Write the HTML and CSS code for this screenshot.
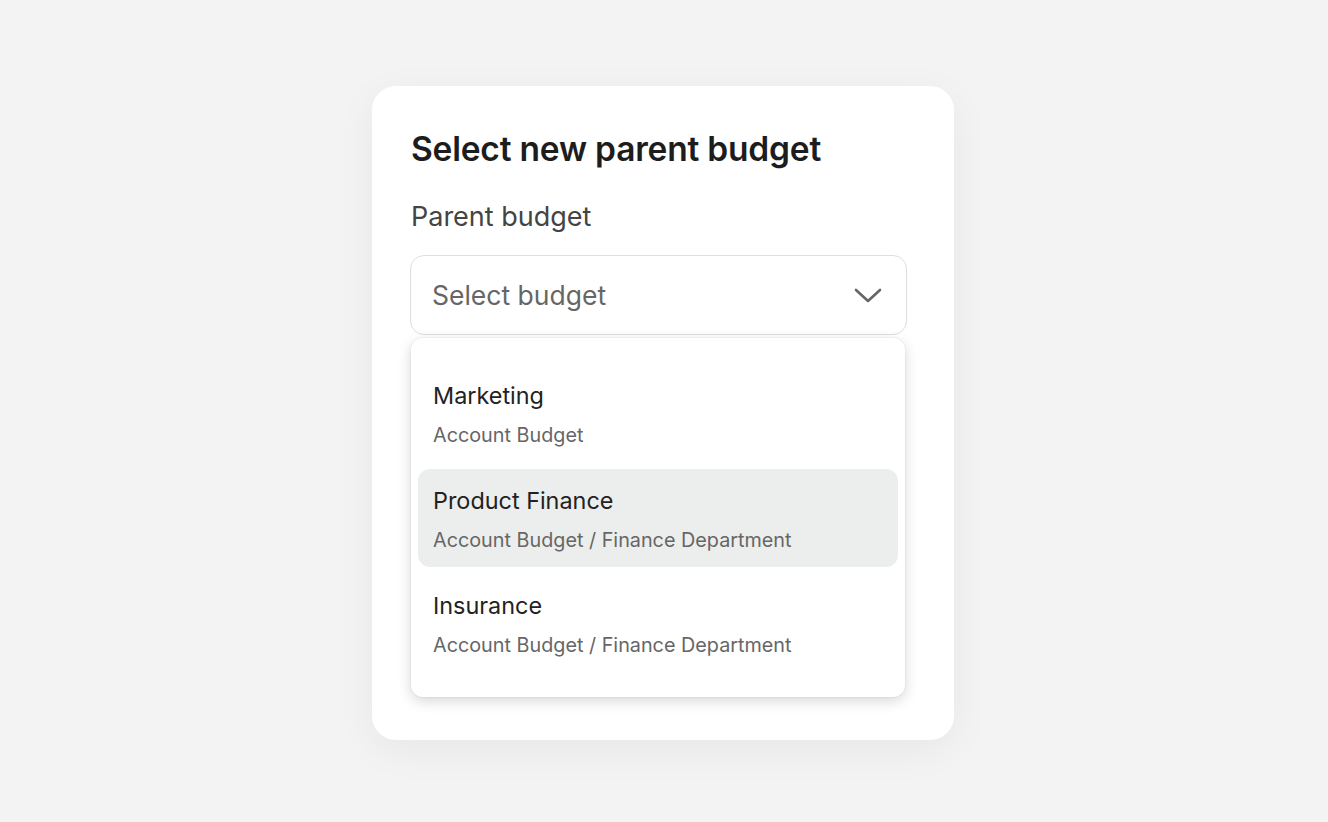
FILE: index.html
```html
<!DOCTYPE html>
<html>
<head>
<meta charset="utf-8">
<link rel="stylesheet" href="styles.css">
</head>
<body>
<div class="page">
  <div class="card">
    <h1 class="title">Select new parent budget</h1>
    <div class="label">Parent budget</div>
    <div class="select">
      <span class="placeholder">Select budget</span>
      <svg class="chevron" width="28" height="17" viewBox="0 0 28 17"><polyline points="2,3 14,14 26,3" fill="none" stroke="#666" stroke-width="2.6" stroke-linecap="round" stroke-linejoin="round"/></svg>
    </div>
    <div class="menu">
      <div class="item">
        <div class="item-title">Marketing</div>
        <div class="item-sub">Account Budget</div>
      </div>
      <div class="item active">
        <div class="item-title">Product Finance</div>
        <div class="item-sub">Account Budget / Finance Department</div>
      </div>
      <div class="item">
        <div class="item-title">Insurance</div>
        <div class="item-sub">Account Budget / Finance Department</div>
      </div>
    </div>
  </div>
</div>
</body>
</html>
```

FILE: styles.css
```css
* { box-sizing: border-box; }
html, body { margin: 0; padding: 0; }
body {
  background: #f3f3f3;
  font-family: Inter, "Noto Sans", "Liberation Sans", sans-serif;
}
.page {
  width: 1328px;
  height: 822px;
  display: flex;
  justify-content: center;
  align-items: flex-start;
  padding-top: 86px;
}
.card {
  width: 582px;
  height: 654px;
  background: #fff;
  border-radius: 24px;
  box-shadow: 0 10px 40px rgba(0,0,0,0.05);
  padding: 39px 39px 0 39px;
  margin-left: -2px;
}
.title {
  margin: 0;
  font-size: 33.5px;
  font-weight: 600;
  line-height: 48px;
  color: #1d1d1d;
  letter-spacing: -0.2px;
}
.label {
  margin-top: 26px;
  font-size: 27px;
  line-height: 36px;
  color: #444;
}
.select {
  margin-top: 20px;
  margin-left: -1px;
  width: 497px;
  height: 80px;
  border: 1.5px solid #dedede;
  border-radius: 14px;
  display: flex;
  align-items: center;
  justify-content: space-between;
  padding: 0 24px 0 21px;
}
.placeholder {
  font-size: 26.5px;
  color: #666;
}
.chevron { display: block; }
.menu {
  margin-top: 3px;
  width: 494px;
  background: #fff;
  border-radius: 12px;
  box-shadow: 0 4px 14px rgba(0,0,0,0.16), 0 0 0 1px rgba(0,0,0,0.03);
  padding: 26px 7px 25px 7px;
  display: flex;
  flex-direction: column;
  gap: 7px;
}
.item {
  height: 98px;
  border-radius: 12px;
  padding: 15px 15px 0 15px;
}
.item.active { background: #eceeed; }
.item-title {
  font-size: 23.4px;
  line-height: 34px;
  color: #222;
}
.item-sub {
  margin-top: 8px;
  font-size: 19.8px;
  line-height: 28px;
  color: #666;
}
```
